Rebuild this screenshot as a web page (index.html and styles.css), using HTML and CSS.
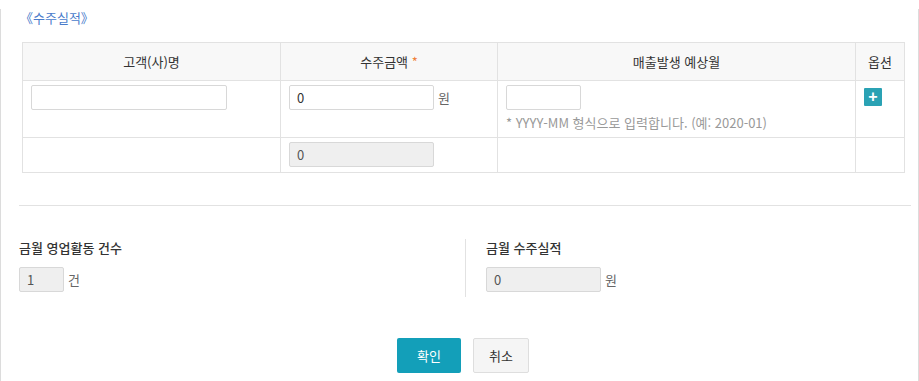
FILE: index.html
```html
<!DOCTYPE html>
<html lang="ko">
<head>
  <meta charset="UTF-8">
  <title>수주실적</title>
  <link rel="stylesheet" href="styles.css">
</head>
<body>

  <div class="panel">
    <h2 class="section-title">《수주실적》</h2>

    <!-- ORDER TABLE -->
    <div class="order-wrap">
      <table class="order-table">
        <colgroup>
          <col class="col-client">
          <col class="col-amount">
          <col class="col-month">
          <col class="col-option">
        </colgroup>
        <thead>
          <tr>
            <th>고객(사)명</th>
            <th>수주금액 <span class="required">*</span></th>
            <th>매출발생 예상월</th>
            <th>옵션</th>
          </tr>
        </thead>
        <tbody>
          <tr class="entry-row">
            <td><input type="text" class="field field-client"></td>
            <td><input type="text" class="field field-amount" value="0"><span class="unit">원</span></td>
            <td>
              <input type="text" class="field field-month">
              <p class="hint">* YYYY-MM 형식으로 입력합니다. (예: 2020-01)</p>
            </td>
            <td><button class="add-btn" title="추가">+</button></td>
          </tr>
          <tr class="total-row">
            <td></td>
            <td><input type="text" class="field field-amount" value="0" disabled></td>
            <td></td>
            <td></td>
          </tr>
        </tbody>
      </table>
    </div>

    <hr class="divider">

    <!-- MONTHLY SUMMARY -->
    <div class="summary">
      <div class="summary-col">
        <div class="summary-label">금월 영업활동 건수</div>
        <input type="text" class="field field-count" value="1" disabled><span class="unit">건</span>
      </div>
      <div class="summary-col summary-right">
        <div class="summary-label">금월 수주실적</div>
        <input type="text" class="field field-total" value="0" disabled><span class="unit">원</span>
      </div>
    </div>

    <div class="actions">
      <button class="btn btn-primary">확인</button>
      <button class="btn btn-cancel">취소</button>
    </div>
  </div>

</body>
</html>
```

FILE: styles.css
```css
:root {
  --border-color: #dcdcdc;
  --line-color: #e2e2e2;
  --text-color: #333;
  --muted-color: #999;
  --accent-color: #139fb9;
  --title-color: #4a7ccb;
}
body {
  margin: 0;
  padding: 0;
  font-family: "Noto Sans CJK KR", "Noto Sans", sans-serif;
  font-size: 13px;
  color: var(--text-color);
  background: #fff;
}
.panel {
  width: 917px;
  height: 380px;
  border: 1px solid var(--border-color);
  border-top: none;
}
.section-title {
  margin: 9px 0 15px 19px;
  font-size: 13px;
  line-height: 18px;
  font-weight: normal;
  color: var(--title-color);
}
.order-wrap {
  padding: 0 13px 0 21px;
}
.order-table {
  width: 100%;
  border-collapse: collapse;
  border: 1px solid var(--line-color);
}
.col-client { width: 258px; }
.col-amount { width: 217px; }
.col-month { width: 358px; }
.col-option { width: 49px; }
.order-table th {
  height: 37px;
  padding: 0;
  background: #f8f8f8;
  font-weight: normal;
  border: 1px solid var(--line-color);
}
.order-table td {
  padding: 4px 8px 0;
  border: 1px solid var(--line-color);
  vertical-align: top;
}
.entry-row td {
  height: 52px;
}
.total-row td {
  height: 30px;
}
.required {
  color: #f0803c;
}
.field {
  box-sizing: border-box;
  height: 25px;
  padding: 0 7px;
  border: 1px solid #d8d8d8;
  border-radius: 2px;
  font-family: inherit;
  font-size: 13px;
  color: var(--text-color);
  background: #fff;
  vertical-align: middle;
  outline: none;
}
.field:disabled {
  background: #efefef;
  color: #555;
}
.field-client { width: 196px; }
.field-amount { width: 145px; }
.field-month { width: 75px; }
.field-count { width: 45px; }
.field-total { width: 115px; }
.unit {
  margin-left: 4px;
  color: #666;
  vertical-align: middle;
}
.hint {
  margin: 4px 0 0;
  line-height: 18px;
  color: var(--muted-color);
}
.add-btn {
  display: block;
  width: 18px;
  height: 18px;
  margin-top: 3px;
  padding: 0;
  border: none;
  border-radius: 1px;
  background: #2aa2b4;
  color: #fff;
  font-size: 16px;
  font-weight: bold;
  line-height: 18px;
  cursor: pointer;
}
.divider {
  margin: 32px 7px 0 18px;
  border: none;
  border-top: 1px solid var(--line-color);
}
.summary {
  display: flex;
  margin: 33px 0 0 18px;
}
.summary-col {
  flex: 0 0 446px;
  padding-bottom: 5px;
}
.summary-right {
  flex: 1;
  padding-left: 20px;
  border-left: 1px solid var(--line-color);
}
.summary-label {
  margin-bottom: 10px;
  line-height: 18px;
  font-weight: 500;
}
.actions {
  display: flex;
  justify-content: center;
  gap: 12px;
  margin-top: 41px;
  padding-left: 7px;
}
.btn {
  height: 35px;
  border-radius: 2px;
  font-family: inherit;
  font-size: 13px;
  cursor: pointer;
}
.btn-primary {
  width: 64px;
  border: none;
  background: var(--accent-color);
  color: #fff;
}
.btn-cancel {
  width: 56px;
  border: 1px solid #dedede;
  background: #f5f5f5;
  color: var(--text-color);
}
```
